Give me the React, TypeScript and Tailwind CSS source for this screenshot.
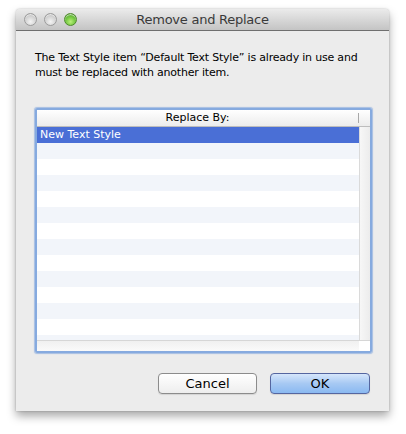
import React from "react";

const font = { fontFamily: '"DejaVu Sans", "Liberation Sans", sans-serif' };

function Light({ green }: { green?: boolean }) {
  return (
    <div
      className={
        green
          ? "h-[13px] w-[13px] rounded-full border border-[#4f8a2c] bg-[radial-gradient(circle_at_50%_70%,#b9f07a_0%,#6cc23a_55%,#3f8a1e_100%)] shadow-[inset_0_1px_1px_rgba(255,255,255,0.7)]"
          : "h-[13px] w-[13px] rounded-full border border-[#9c9c9c] bg-[radial-gradient(circle_at_50%_70%,#f4f4f4_0%,#d2d2d2_55%,#a9a9a9_100%)] shadow-[inset_0_1px_1px_rgba(255,255,255,0.7)]"
      }
    />
  );
}

export default function App() {
  const rows = Array.from({ length: 13 }, (_, i) => i + 1);
  return (
    <div className="min-h-[434px] w-[406px] bg-white pl-[16px] pt-[9px]" style={font}>
      <div className="flex h-[402px] w-[373px] flex-col rounded-t-[4px] bg-[#ececec] shadow-[0_5px_10px_rgba(0,0,0,0.35),0_0_2px_rgba(0,0,0,0.25)]">
        {/* title bar */}
        <div className="relative flex h-[22px] shrink-0 items-center rounded-t-[4px] border-b border-[#6f6f6f] bg-gradient-to-b from-[#ebebeb] to-[#c4c4c4] px-[8px]">
          <div className="flex gap-[7px]">
            <Light />
            <Light />
            <Light green />
          </div>
          <div className="absolute inset-x-0 top-0 flex h-[22px] items-center justify-center text-[13px] tracking-[-0.25px] text-[#3a3a3a]">
            Remove and Replace
          </div>
        </div>
        {/* message */}
        <div className="px-[19px] pt-[19px] text-[11px] leading-[15px] tracking-[-0.2px] text-black">
          <p>The Text Style item “Default Text Style” is already in use and</p>
          <p>must be replaced with another item.</p>
        </div>
        {/* list */}
        <div className="ml-[19px] mt-[28px] h-[245px] w-[337px] rounded-[2px] border-[2px] border-[#86aadf] shadow-[0_0_1px_1px_rgba(120,160,220,0.6)]">
          <div className="flex h-full flex-col bg-white">
            <div className="flex h-[17px] shrink-0 border-b border-[#bdbdbd] bg-gradient-to-b from-white to-[#ececec]">
              <div className="flex flex-1 items-center justify-center text-[11px] text-black">Replace By:</div>
              <div className="my-[3px] w-px bg-[#a8a8a8]" />
              <div className="w-[11px]" />
            </div>
            <div className="flex min-h-0 flex-1">
              <div className="flex-1 overflow-hidden">
                <div className="flex h-[16px] items-center bg-[#4a6fd6] pl-[3px] text-[11px] text-white">
                  New Text Style
                </div>
                {rows.map((i) => (
                  <div key={i} className={i % 2 === 1 ? "h-[16px] bg-[#f2f5fa]" : "h-[16px] bg-white"} />
                ))}
              </div>
              <div className="w-[11px] border-l border-[#dadada] bg-gradient-to-r from-[#f7f7f7] to-[#ececec]" />
            </div>
            <div className="flex h-[11px] shrink-0 border-t border-[#d6d6d6]">
              <div className="flex-1 bg-gradient-to-b from-[#f0f0f0] to-[#fafafa]" />
              <div className="w-[11px] bg-white" />
            </div>
          </div>
        </div>
        {/* buttons */}
        <div className="mt-[20px] flex justify-end gap-[13px] pr-[19px]">
          <button className="h-[21px] w-[99px] rounded-[4px] border border-[#8c8c8c] bg-gradient-to-b from-white to-[#eeeeee] text-[13px] text-black shadow-[0_1px_1px_rgba(0,0,0,0.1)]">
            Cancel
          </button>
          <button className="h-[21px] w-[100px] rounded-[4px] border border-[#5566a0] bg-gradient-to-b from-[#d6e6fb] via-[#a7c9f3] to-[#8ab9f1] text-[13px] text-black shadow-[0_1px_1px_rgba(0,0,0,0.1)]">
            OK
          </button>
        </div>
      </div>
    </div>
  );
}
